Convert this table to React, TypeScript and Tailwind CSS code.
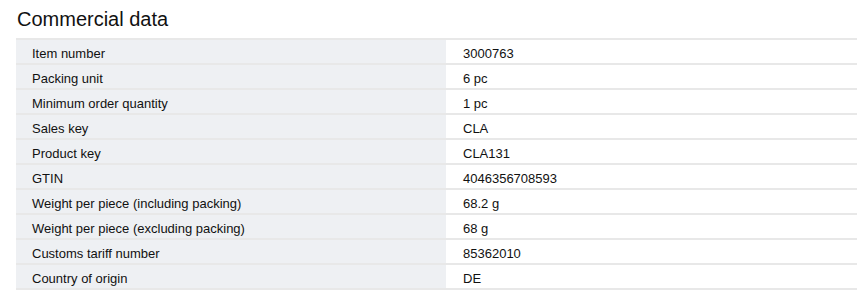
const rows: [string, string][] = [
  ["Item number", "3000763"],
  ["Packing unit", "6 pc"],
  ["Minimum order quantity", "1 pc"],
  ["Sales key", "CLA"],
  ["Product key", "CLA131"],
  ["GTIN", "4046356708593"],
  ["Weight per piece (including packing)", "68.2 g"],
  ["Weight per piece (excluding packing)", "68 g"],
  ["Customs tariff number", "85362010"],
  ["Country of origin", "DE"],
];

export default function App() {
  return (
    <div className="w-[860px] h-[307px] bg-white pl-4 pr-[3px] pt-[7px] font-['Liberation_Sans',Arial,sans-serif] text-[#111]">
      {/* Title */}
      <h2 className="text-[20px] leading-[24px] pl-[1px] mb-[7px]">Commercial data</h2>
      {/* Table */}
      <table className="w-full border-collapse text-[13px]">
        <tbody>
          {rows.map(([label, value]) => (
            <tr key={label} className="border-y-2 border-[#e8e8e8]">
              <td className="w-[430px] h-[25px] bg-[#eef0f3] pl-4 pt-[4px] pb-0 leading-[19px]">{label}</td>
              <td className="pl-[17px] pt-[4px] pb-0 leading-[19px]">{value}</td>
            </tr>
          ))}
        </tbody>
      </table>
    </div>
  );
}
